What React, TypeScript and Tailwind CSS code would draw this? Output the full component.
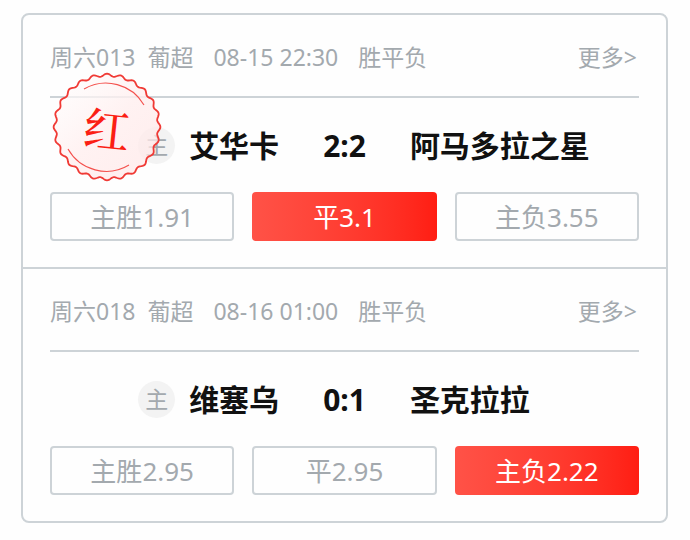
import React from 'react';

interface Option {
  readonly label: string;
  readonly odds: string;
}

interface Match {
  readonly id: string;
  readonly league: string;
  readonly time: string;
  readonly play: string;
  readonly home: string;
  readonly away: string;
  readonly score: string;
  readonly options: Option[];
  readonly picked: number;
  readonly hit: boolean;
}

const matches: Match[] = [
  {
    id: '周六013',
    league: '葡超',
    time: '08-15 22:30',
    play: '胜平负',
    home: '艾华卡',
    away: '阿马多拉之星',
    score: '2:2',
    options: [
      { label: '主胜', odds: '1.91' },
      { label: '平', odds: '3.1' },
      { label: '主负', odds: '3.55' },
    ],
    picked: 1,
    hit: true,
  },
  {
    id: '周六018',
    league: '葡超',
    time: '08-16 01:00',
    play: '胜平负',
    home: '维塞乌',
    away: '圣克拉拉',
    score: '0:1',
    options: [
      { label: '主胜', odds: '2.95' },
      { label: '平', odds: '2.95' },
      { label: '主负', odds: '2.22' },
    ],
    picked: 2,
    hit: false,
  },
];

// Wavy outline of the seal, sampled around the circle
function sealPath(waves: number, radius: number, depth: number) {
  const steps = waves * 12;
  const points: string[] = [];
  for (let i = 0; i < steps; i++) {
    const angle = (i / steps) * Math.PI * 2;
    const r = radius + depth * Math.cos(waves * angle);
    const x = 55 + r * Math.sin(angle);
    const y = 55 - r * Math.cos(angle);
    points.push(`${x.toFixed(2)} ${y.toFixed(2)}`);
  }
  return `M${points.join('L')}Z`;
}

function HitSeal() {
  return (
    <div className="absolute left-0.5 -top-[26px] size-[110px]">
      <svg viewBox="0 0 110 110" className="size-full" fill="none" aria-hidden="true">
        <defs>
          <linearGradient id="seal" x1="0" y1="0" x2="1" y2="1">
            <stop offset="0" stopColor="#fff" stopOpacity="0.6" />
            <stop offset="0.5" stopColor="#ffefef" stopOpacity="0.8" />
            <stop offset="1" stopColor="#ffe6e6" stopOpacity="0.7" />
          </linearGradient>
        </defs>
        <path d={sealPath(24, 52, 1.4)} fill="url(#seal)" stroke="#f03a35" strokeWidth="1.8" />
        <path d="M32 17A44 44 0 0 1 92 33" stroke="#f4514d" strokeWidth="1.1" />
        <path d="M16 77A44 44 0 0 0 77 93" stroke="#f4514d" strokeWidth="1.1" />
      </svg>
      <span className="absolute inset-0 flex items-center justify-center rotate-6 text-[46px] leading-none font-medium text-[#fb1f14] font-['Noto_Serif_CJK_SC','Noto_Sans_CJK_SC',serif]">
        红
      </span>
    </div>
  );
}

function MatchRow({ match }: { readonly match: Match }) {
  return (
    <section className="px-[27px] pb-[26px]">
      <header className="flex items-center justify-between h-[83px] pt-1 border-b-2 border-[#cdd3d7] text-[23px] text-[#a3a9ae]">
        <div className="flex items-center gap-5">
          <span className="flex gap-3">
            <span>{match.id}</span>
            <span>{match.league}</span>
          </span>
          <span>{match.time}</span>
          <span>{match.play}</span>
        </div>
        <a href="#more" className="pr-0.5">更多&gt;</a>
      </header>

      <div className="relative">
        <div className="grid grid-cols-[1fr_auto_1fr] items-center gap-11 h-[94px] text-[30px] font-bold text-[#111]">
          <div className="flex items-center justify-end gap-[14px]">
            <span className="flex items-center justify-center size-[37px] rounded-full bg-[#f3f3f3] text-[23px] font-normal text-[#a3a9ae]">
              主
            </span>
            <span>{match.home}</span>
          </div>
          <span>{match.score}</span>
          <span className="whitespace-nowrap">{match.away}</span>
        </div>
        {match.hit && <HitSeal />}
      </div>

      <div className="grid grid-cols-3 gap-[18px]">
        {match.options.map((option, idx) => (
          <button
            key={option.label}
            type="button"
            className={
              idx === match.picked
                ? 'h-[49px] rounded-sm bg-linear-to-r from-[#ff5247] to-[#ff1d12] text-[26px] leading-none text-white'
                : 'h-[49px] rounded-sm border-2 border-[#cdd3d7] text-[26px] leading-none text-[#a3a9ae]'
            }
          >
            {option.label}
            {option.odds}
          </button>
        ))}
      </div>
    </section>
  );
}

export default function App() {
  return (
    <main className="min-h-screen bg-[#fefefe] pl-[21px] pr-[22px] py-[13px] font-['Noto_Sans','Noto_Sans_CJK_SC',sans-serif]">
      <div className="rounded-lg border-2 border-[#cdd3d7] divide-y-2 divide-[#cdd3d7]">
        {matches.map((match) => (
          <MatchRow key={match.id} match={match} />
        ))}
      </div>
    </main>
  );
}
